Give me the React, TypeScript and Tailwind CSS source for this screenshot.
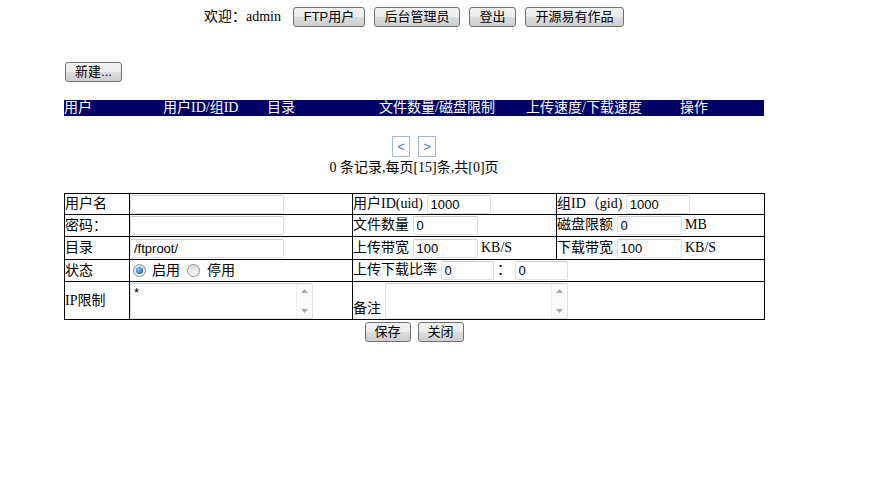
import React from 'react';

const serif = { fontFamily: '"Liberation Serif", "Noto Sans CJK SC", serif' };
const sans = { fontFamily: '"Liberation Sans", "Noto Sans CJK SC", sans-serif' };

function Btn({ label, w }: { label: string; w: string }) {
  return (
    <button
      type="button"
      style={sans}
      className={`${w} h-[20px] shrink-0 rounded-[3px] border border-[#707070] bg-[linear-gradient(#f2f2f2,#ebebeb_50%,#dddddd_50%,#cfcfcf)] text-[13px] leading-[18px] text-black`}
    >
      {label}
    </button>
  );
}

function Field({ w, value = '' }: { w: string; value?: string }) {
  return (
    <input
      readOnly
      value={value}
      style={sans}
      className={`${w} h-[19px] rounded-[2px] border border-[#dcdfe3] border-t-[#c9ccd1] bg-white px-[3px] align-middle text-[13px] leading-[17px] text-black outline-none`}
    />
  );
}

// textarea with an old-style scrollbar drawn beside it
function Memo({ value = '' }: { value?: string }) {
  return (
    <div className="flex h-[36px] w-[183px] rounded-[2px] border border-[#dcdfe3] border-t-[#c9ccd1] bg-white">
      <textarea
        readOnly
        value={value}
        style={sans}
        className="h-full flex-1 resize-none overflow-hidden bg-transparent px-[3px] pt-[1px] text-[13px] leading-[15px] text-black outline-none"
      />
      <div className="flex w-[16px] flex-col items-center justify-between border-l border-[#f0f0f0] bg-[#fbfbfb] py-[5px]">
        <svg width="7" height="4" viewBox="0 0 7 4">
          <path d="M3.5 0 L7 4 L0 4 Z" fill="#a8a8a8" />
        </svg>
        <svg width="7" height="4" viewBox="0 0 7 4">
          <path d="M0 0 L7 0 L3.5 4 Z" fill="#a8a8a8" />
        </svg>
      </div>
    </div>
  );
}

function Radio({ checked }: { checked?: boolean }) {
  return (
    <span className="flex h-[13px] w-[13px] shrink-0 items-center justify-center rounded-full border border-[#8e8f8f] bg-[linear-gradient(#dcdcdc,#f8f8f8)]">
      {checked && <span className="h-[7px] w-[7px] rounded-full bg-[radial-gradient(circle_at_40%_35%,#8fd0ff,#1f6fc5_70%,#17509a)]" />}
    </span>
  );
}

const cols = ['用户', '用户ID/组ID', '目录', '文件数量/磁盘限制', '上传速度/下载速度', '操作'];

export default function App() {
  const td = 'border border-black p-0 text-[14px] leading-[16px]';

  return (
    <div style={serif} className="min-h-[499px] bg-white pt-[7px] text-black">
      <div className="ml-[64px] w-[700px]">
        {/* welcome bar */}
        <div className="flex h-[20px] items-center justify-center">
          <span className="text-[14px] leading-[16px]">欢迎：admin</span>
          <div className="ml-[12px] flex gap-[9px]">
            <Btn label="FTP用户" w="w-[72px]" />
            <Btn label="后台管理员" w="w-[86px]" />
            <Btn label="登出" w="w-[47px]" />
            <Btn label="开源易有作品" w="w-[99px]" />
          </div>
        </div>

        <div className="mt-[35px] ml-[1px] flex">
          <Btn label="新建..." w="w-[57px]" />
        </div>

        {/* list header */}
        <div className="mt-[18px] grid h-[16px] grid-cols-[99px_104px_112px_147px_154px_1fr] bg-[#000066] text-[14px] leading-[15px] text-white">
          {cols.map((c) => (
            <span key={c}>{c}</span>
          ))}
        </div>

        {/* pager */}
        <div className="mt-[20px] flex justify-center gap-[8px]" style={sans}>
          <button type="button" className="h-[21px] w-[18px] border border-[#a4b4e4] bg-white text-[13px] leading-[19px] text-[#4a6fd0]">
            &lt;
          </button>
          <button type="button" className="h-[21px] w-[18px] border border-[#a4b4e4] bg-white text-[13px] leading-[19px] text-[#4a6fd0]">
            &gt;
          </button>
        </div>
        <div className="mt-[2px] h-[18px] text-center text-[14px] leading-[18px]">0 条记录,每页[15]条,共[0]页</div>

        {/* edit form */}
        <table className="mt-[16px] w-[700px] table-fixed border-collapse">
          <colgroup>
            <col className="w-[65px]" />
            <col className="w-[223px]" />
            <col className="w-[204px]" />
            <col className="w-[208px]" />
          </colgroup>
          <tbody>
            <tr className="h-[21px]">
              <td className={td}>用户名</td>
              <td className={td}>
                <Field w="w-[154px]" />
              </td>
              <td className={td}>
                用户ID(uid) <Field w="w-[64px]" value="1000" />
              </td>
              <td className={td}>
                组ID（gid) <Field w="w-[64px]" value="1000" />
              </td>
            </tr>
            <tr className="h-[22px]">
              <td className={td}>密码：</td>
              <td className={td}>
                <Field w="w-[154px]" />
              </td>
              <td className={td}>
                文件数量 <Field w="w-[65px]" value="0" />
              </td>
              <td className={td}>
                磁盘限额 <Field w="w-[65px]" value="0" /> MB
              </td>
            </tr>
            <tr className="h-[23px]">
              <td className={td}>目录</td>
              <td className={td}>
                <Field w="w-[154px]" value="/ftproot/" />
              </td>
              <td className={td}>
                上传带宽 <Field w="w-[65px]" value="100" /> KB/S
              </td>
              <td className={td}>
                下载带宽 <Field w="w-[65px]" value="100" /> KB/S
              </td>
            </tr>
            <tr className="h-[22px]">
              <td className={td}>状态</td>
              <td className={td}>
                <div className="flex items-center pl-[3px]">
                  <Radio checked />
                  <span className="ml-[6px]">启用</span>
                  <span className="ml-[7px]">
                    <Radio />
                  </span>
                  <span className="ml-[7px]">停用</span>
                </div>
              </td>
              <td className={td} colSpan={2}>
                上传下载比率 <Field w="w-[53px]" value="0" /> ： <Field w="w-[53px]" value="0" />
              </td>
            </tr>
            <tr className="h-[38px]">
              <td className={td}>IP限制</td>
              <td className={td}>
                <Memo value="*" />
              </td>
              <td className={td} colSpan={2}>
                <div className="flex items-end gap-[4px]">
                  <span className="pb-[2px]">备注</span>
                  <Memo />
                </div>
              </td>
            </tr>
          </tbody>
        </table>

        <div className="mt-[2px] flex justify-center gap-[7px]">
          <Btn label="保存" w="w-[46px]" />
          <Btn label="关闭" w="w-[46px]" />
        </div>
      </div>
    </div>
  );
}
